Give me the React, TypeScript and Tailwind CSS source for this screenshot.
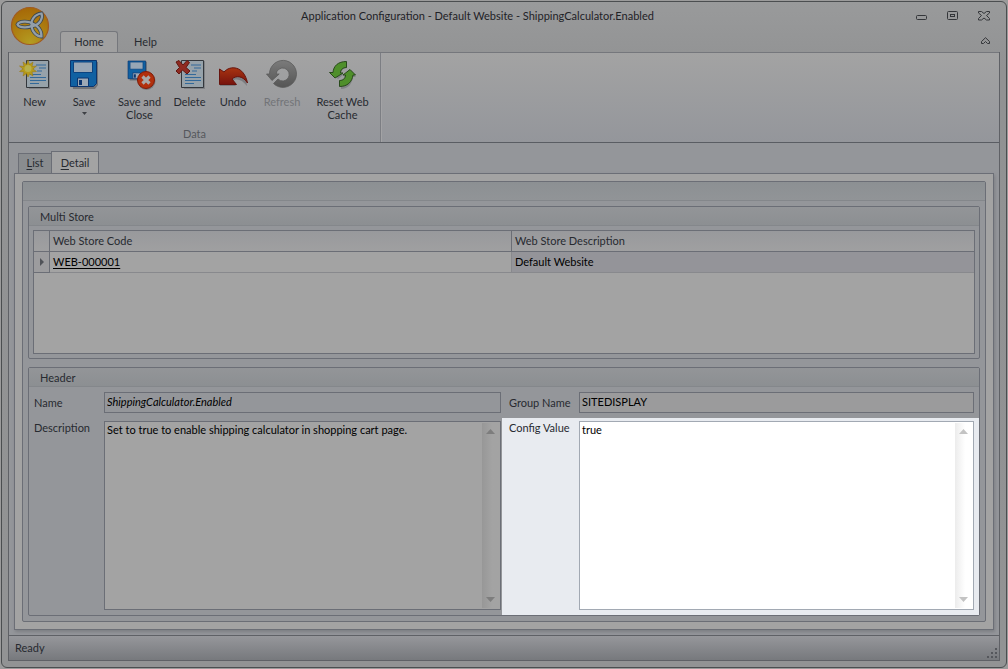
import type { ReactNode } from "react";

interface RibbonButtonProps {
  label: string;
  className: string;
  icon: ReactNode;
  disabled?: boolean;
  hasMenu?: boolean;
}

function RibbonButton({ label, className, icon, disabled, hasMenu }: RibbonButtonProps) {
  return (
    <button
      type="button"
      disabled={disabled}
      className={`flex shrink-0 flex-col items-center leading-[13px] text-[#272a30] disabled:text-[#727478] ${className}`}
    >
      <span className="mb-1 block h-8 w-8">{icon}</span>
      <span>{label}</span>
      {hasMenu && (
        <svg width="5" height="3" viewBox="0 0 5 3" className="mt-1" aria-hidden="true">
          <path d="M0 0h5L2.500 3z" fill="#3e4045" />
        </svg>
      )}
    </button>
  );
}

function Logo() {
  return (
    <svg width="40" height="40" viewBox="0 0 40 40" aria-hidden="true">
      <defs>
        <radialGradient id="orb" cx="0.5" cy="0.95" r="0.9">
          <stop offset="0" stopColor="#b39c22" />
          <stop offset="0.5" stopColor="#ae8112" />
          <stop offset="1" stopColor="#a66a08" />
        </radialGradient>
      </defs>
      <circle cx="20" cy="20" r="18.500" fill="url(#orb)" stroke="#a05a22" strokeWidth="1.200" />
      <g fill="none" stroke="#3b4650" strokeWidth="3.800">
        <path d="M23 19C19 22.500 9 22 7.500 18.500 9 15 19 14.500 23 18z" />
        <path d="M22 19.500c-2-5 3-11.500 9.500-12 2 5-2 11-8 12.500z" />
        <path d="M22 17.500c5 1 10 7 9.500 13-6 0-11-7-9.500-13z" />
      </g>
      <g fill="none" stroke="#939fa9" strokeWidth="2.200">
        <path d="M23 19C19 22.500 9 22 7.500 18.500 9 15 19 14.500 23 18z" />
        <path d="M22 19.500c-2-5 3-11.500 9.500-12 2 5-2 11-8 12.500z" />
        <path d="M22 17.500c5 1 10 7 9.500 13-6 0-11-7-9.500-13z" />
      </g>
    </svg>
  );
}

function PageShape() {
  return (
    <g>
      <path d="M10 2h21v28H10z" fill="#6d7074" opacity="0.6" />
      <path d="M7.500 1.500h22v27h-22z" fill="#96a2aa" stroke="#33373c" />
      <path d="M17 6h10M20 9h7M18 12h5M11 15.500h11M11 18.500h16M11 21.500h16M11 24.500h9" stroke="#32699a" />
    </g>
  );
}

function NewIcon() {
  return (
    <svg width="32" height="32" viewBox="0 0 32 32" aria-hidden="true">
      <PageShape />
      <path
        d="M9 1l1.500 4.500L14 3l-1 4.500 4.500-.5-3.500 3 3.500 2.500-4.500.5 1 4-3.500-2L9 18l-1.500-3.500L4 17l1-4-4.500-.5L4 10 .5 7 5 7.500 4 3l3.500 2.500z"
        fill="#b59a1b"
        stroke="#97750d"
        strokeWidth="0.500"
      />
      <circle cx="9" cy="9.500" r="3.500" fill="#b8b04c" />
    </svg>
  );
}

function DeleteIcon() {
  return (
    <svg width="32" height="32" viewBox="0 0 32 32" aria-hidden="true">
      <PageShape />
      <path
        d="M2 3l3-1.500 4 4.500 4-4.500 2.500 2-3.500 5L16 12l-3 3-4.500-4L5 15l-3-3 3.500-3.500z"
        fill="#8f2a21"
        stroke="#611710"
      />
    </svg>
  );
}

function FloppyShape() {
  return (
    <g>
      <path d="M3 3h26v23l-3 4H4z" fill="#55595e" opacity="0.6" />
      <path d="M1.500 1.500h26v23l-3 3h-23z" fill="#1061a2" stroke="#0b356f" />
      <path d="M4.500 3h19v10.500h-19z" fill="#98a6b5" stroke="#0b4380" />
      <path d="M8.500 19h11v8.500h-11z" fill="#9da9b6" stroke="#0b356f" />
      <path d="M10 21h3v5h-3z" fill="#0b356f" />
    </g>
  );
}

function SaveIcon() {
  return (
    <svg width="32" height="32" viewBox="-1 0 32 32" aria-hidden="true">
      <FloppyShape />
    </svg>
  );
}

function SaveCloseIcon() {
  return (
    <svg width="32" height="32" viewBox="-1 0 32 32" aria-hidden="true">
      <g transform="translate(2 1) scale(.68)">
        <FloppyShape />
      </g>
      <circle cx="21.500" cy="22" r="9" fill="#55595e" opacity="0.5" />
      <circle cx="21" cy="21" r="8.500" fill="#b2300d" stroke="#801b07" />
      <path d="M17.500 17.500l7 7m0-7l-7 7" stroke="#a9a9a9" strokeWidth="3.200" />
    </svg>
  );
}

function UndoIcon() {
  return (
    <svg width="32" height="32" viewBox="0 0 32 32" aria-hidden="true">
      <defs>
        <linearGradient id="undo" x1="0" y1="0" x2="0" y2="1">
          <stop offset="0" stopColor="#a83411" />
          <stop offset="1" stopColor="#77130d" />
        </linearGradient>
      </defs>
      <path d="M3 11l5 4c8-8 21-3 22 12-5-7-11-8-15-5l4 5H3z" fill="#66686c" opacity="0.600" />
      <path
        d="M2.500 10l4.500 3C13 6 27 6.500 30.500 24 26 17 19.500 16 15 20l4.500 5.500h-17z"
        fill="url(#undo)"
        stroke="#66140e"
      />
    </svg>
  );
}

function RefreshIcon() {
  return (
    <svg width="32" height="32" viewBox="0 0 32 32" aria-hidden="true">
      <defs>
        <linearGradient id="refresh" x1="0" y1="0" x2="0" y2="1">
          <stop offset="0" stopColor="#7b7b7b" />
          <stop offset="1" stopColor="#555" />
        </linearGradient>
      </defs>
      <path
        d="M3.500 15A13.500 13.500 0 1 1 7.500 24.500L12 20a6.500 6.500 0 1 0-1.800-5h3L6 21.500.5 15z"
        fill="url(#refresh)"
        stroke="#5a5a5a"
        strokeWidth="0.800"
      />
    </svg>
  );
}

function ResetIcon() {
  return (
    <svg width="32" height="32" viewBox="0 0 32 32" aria-hidden="true">
      <g fill="#64686a" opacity="0.500">
        <path d="M20 3v6c-5 0-6 3-6 6h3l-6 5-6-6h3C8 8 12 3 20 3z" />
        <path d="M14 30v-6c5 0 6-3 6-6h-3l5-7 7 7h-3c-1 7-5 12-12 12z" />
      </g>
      <g fill="#4f8f2b" stroke="#28491b">
        <path d="M19.500 2.500v6c-4 0-6 2.500-6 5.500h2.500L8 19 2.500 13.500H6C6.500 7 11 2.500 19.500 2.500z" />
        <path d="M12.500 27.500v-6c4 0 6-2.500 6-5.500H16l7-5.500 5.500 5.500H26c-1 7-5.500 11.500-13.500 11.500z" />
      </g>
    </svg>
  );
}

function GroupBox({ title, className, children }: { title: string; className: string; children: ReactNode }) {
  return (
    <section className={`flex flex-col rounded-xs border border-[#6b6e76] ${className}`}>
      <h2 className="flex h-[19px] shrink-0 items-center border-b border-[#84878b] bg-linear-to-b from-[#939598] to-[#8c8f92] pl-[11px] pt-[2px]">
        {title}
      </h2>
      {children}
    </section>
  );
}

interface MemoFieldProps {
  id: string;
  value: string;
  lit?: boolean;
}

// Multi-line editor with its own always visible scroll track.
function MemoField({ id, value, lit }: MemoFieldProps) {
  return (
    <div className={`flex min-w-0 flex-1 border ${lit ? "border-[#a2a9b3] bg-white" : "border-[#6b6e76] bg-[#a3a3a3]"}`}>
      <textarea
        id={id}
        defaultValue={value}
        className="min-w-0 flex-1 resize-none overflow-hidden px-[2px] leading-4 text-black outline-none"
      />
      <div
        className={`my-px mr-px flex w-[17px] flex-col items-center justify-between bg-linear-to-r py-[6px] ${
          lit ? "from-[#ececec] to-white to-60%" : "from-[#979797] to-[#a3a3a3] to-60%"
        }`}
      >
        <button type="button" aria-label="Scroll up">
          <svg width="9" height="5" viewBox="0 0 9 5" className="block">
            <path d="M0 5h9L4.500 0z" fill={lit ? "#c3c3c3" : "#7d7d7d"} />
          </svg>
        </button>
        <button type="button" aria-label="Scroll down">
          <svg width="9" height="5" viewBox="0 0 9 5" className="block">
            <path d="M0 0h9L4.500 5z" fill={lit ? "#c3c3c3" : "#7d7d7d"} />
          </svg>
        </button>
      </div>
    </div>
  );
}

function TitleBar() {
  return (
    <header className="flex h-[50px] shrink-0 items-start">
      <div className="flex w-[42px] justify-end pt-1">
        <Logo />
      </div>
      <div className="flex min-w-0 flex-1 flex-col">
        <h1 className="h-7 pt-[6px] text-center leading-4 text-[#1f2227]">
          Application Configuration - Default Website - ShippingCalculator.Enabled
        </h1>
        <nav className="flex pl-[10px] pt-px">
          <button
            type="button"
            className="-mb-px h-[22px] w-[58px] rounded-t-[3px] border border-b-0 border-[#75777c] bg-[#a0a0a0]"
          >
            Home
          </button>
          <button type="button" className="h-[22px] w-[55px] pt-px">
            Help
          </button>
        </nav>
      </div>
      <div className="flex w-[95px] flex-col pr-[10px] pt-[8px]">
        <div className="flex h-[11px] items-center justify-between pl-[11px]">
          <button type="button" aria-label="Minimize">
            <svg width="11" height="11" viewBox="0 0 11 11" fill="none" stroke="#34363a" className="block">
              <rect x="0.500" y="5.500" width="10" height="4" rx="1" />
            </svg>
          </button>
          <button type="button" aria-label="Maximize">
            <svg width="11" height="10" viewBox="0 0 11 10" fill="none" stroke="#34363a" className="block">
              <rect x="0.500" y="0.500" width="10" height="8" rx="1" />
              <rect x="3.500" y="3.500" width="4" height="2" />
            </svg>
          </button>
          <button type="button" aria-label="Close">
            <svg width="12" height="10" viewBox="0 0 12 10" fill="none" stroke="#34363a" className="block">
              <path d="M.5.500h3L6 2.500 8.500.500h3v1.500L8.500 4.500l3 3V9h-3L6 7 3.500 9h-3V7.500l3-3-3-2.500z" />
            </svg>
          </button>
        </div>
        <button type="button" aria-label="Collapse ribbon" className="mt-4 self-end">
          <svg width="9" height="8" viewBox="0 0 9 8" fill="none" stroke="#34363a" className="block">
            <path d="M4.500.700L8.500 4.500v2h-2l-2-2-2 2h-2v-2z" />
          </svg>
        </button>
      </div>
    </header>
  );
}

function Ribbon() {
  return (
    <div className="flex h-[91px] shrink-0 border-b border-t border-b-[#5a5d63] border-t-[#75777c] bg-linear-to-b from-[#a3a3a3] to-[#94969b]">
      <div className="flex w-[372px] flex-col border-r border-[#7c7e83]">
        <div className="flex flex-1 items-start pl-[3px] pt-[6px]">
          <RibbonButton label="New" className="w-[45px]" icon={<NewIcon />} />
          <RibbonButton label="Save" className="w-[54px]" icon={<SaveIcon />} hasMenu />
          <RibbonButton label="Save and Close" className="w-[57px]" icon={<SaveCloseIcon />} />
          <RibbonButton label="Delete" className="w-[43px]" icon={<DeleteIcon />} />
          <RibbonButton label="Undo" className="w-[44px]" icon={<UndoIcon />} />
          <RibbonButton label="Refresh" className="w-[54px]" icon={<RefreshIcon />} disabled />
          <RibbonButton label="Reset Web Cache" className="w-[67px]" icon={<ResetIcon />} />
        </div>
        <div className="h-4 text-center leading-4 text-[#55575c]">Data</div>
      </div>
      <div className="border-l border-[#a3a3a5]" />
    </div>
  );
}

function StoreTable() {
  return (
    <div className="m-1 h-[124px] border border-[#6b6e76] bg-[#a3a3a3]">
      <table className="w-full table-fixed border-separate border-spacing-0 text-left">
        <colgroup>
          <col className="w-4" />
          <col />
          <col />
        </colgroup>
        <thead>
          <tr className="h-[21px] bg-linear-to-b from-[#98999c] to-[#a0a0a1]">
            <th className="border-b border-r border-[#6b6e76] p-0" aria-label="Row" />
            <th className="border-b border-r border-[#6b6e76] px-[3px] py-0 font-normal">Web Store Code</th>
            <th className="border-b border-[#6b6e76] px-[3px] py-0 font-normal">Web Store Description</th>
          </tr>
        </thead>
        <tbody>
          <tr className="h-[21px]">
            <td className="border-b border-r border-[#6b6e76] bg-[#9c9c9e] p-0">
              <svg width="4" height="8" viewBox="0 0 4 8" className="mx-auto block" aria-label="Current row">
                <path d="M0 0l4 4-4 4z" fill="#505358" />
              </svg>
            </td>
            <td className="border-b border-r border-[#88898d] px-[3px] py-0">
              <a href="#web-000001" className="text-black underline underline-offset-2">
                WEB-000001
              </a>
            </td>
            <td className="border-b border-[#88898d] bg-[#949499] px-[3px] py-0 text-black">Default Website</td>
          </tr>
        </tbody>
      </table>
    </div>
  );
}

function HeaderForm() {
  return (
    <div className="grid flex-1 grid-cols-[473fr_477fr] grid-rows-[31px_1fr]">
      <div className="flex py-[5px] pl-[5px] pr-px">
        <label htmlFor="name" className="w-[70px] shrink-0 pt-[3px] leading-4">
          Name
        </label>
        <input
          id="name"
          readOnly
          defaultValue="ShippingCalculator.Enabled"
          className="min-w-0 flex-1 border border-[#6b6e76] px-[2px] pb-px italic text-black outline-none"
        />
      </div>
      <div className="flex py-[5px] pl-[7px] pr-[5px]">
        <label htmlFor="group-name" className="w-[70px] shrink-0 pt-[3px] leading-4">
          Group Name
        </label>
        <input
          id="group-name"
          defaultValue="SITEDISPLAY"
          className="min-w-0 flex-1 border border-[#6b6e76] bg-[#9b9b9c] px-[2px] pb-px text-black outline-none"
        />
      </div>
      <div className="flex pb-[5px] pl-[5px] pr-px pt-[3px]">
        <label htmlFor="description" className="w-[70px] shrink-0 leading-[14px]">
          Description
        </label>
        <MemoField id="description" value="Set to true to enable shipping calculator in shopping cart page." />
      </div>
      <div className="flex bg-[#e8ebf0] pb-[5px] pl-[7px] pr-[5px] pt-[3px]">
        <label htmlFor="config-value" className="w-[70px] shrink-0 leading-[14px]">
          Config Value
        </label>
        <MemoField id="config-value" value="true" lit />
      </div>
    </div>
  );
}

export default function App() {
  return (
    <div className="flex min-h-screen flex-col bg-[#9b9b9b] p-px font-['Lato',sans-serif] text-[11px] text-[#272a30]">
      <div className="flex flex-1 flex-col rounded-md border border-[#4b4e50] bg-[#929394] bg-linear-to-b from-[#999a9b] via-[#919293] via-10% to-[#929394] px-[6px] pb-[6px]">
        <TitleBar />
        <div className="flex flex-1 flex-col border border-t-0 border-[#5f6166] bg-[#94969a]">
          <Ribbon />
          <main className="flex flex-1 flex-col px-[5px] pb-[5px] pt-2">
            <div role="tablist" className="flex items-end pl-1">
              <button
                type="button"
                role="tab"
                aria-selected="false"
                className="h-5 w-[33px] border border-b-0 border-r-0 border-[#6b6e76] bg-[#898c8f]"
              >
                <span className="underline underline-offset-2">L</span>ist
              </button>
              <button
                type="button"
                role="tab"
                aria-selected="true"
                className="-mb-px h-[23px] w-12 border border-b-0 border-[#6b6e76] bg-[#a3a3a3]"
              >
                <span className="underline underline-offset-2">D</span>etail
              </button>
            </div>
            <div className="flex flex-1 flex-col border border-[#6b6e76] bg-[#a3a3a3] p-[7px] shadow-[1px_2px_3px_#7d7f84]">
              <div className="flex flex-1 flex-col rounded-xs border border-[#6b6e76] bg-[#94969a]">
                <div className="h-[19px] shrink-0 border-b border-[#84878b] bg-linear-to-b from-[#8c9093] to-[#919497]" />
                <div className="flex flex-1 flex-col gap-2 p-[5px]">
                  <GroupBox title="Multi Store" className="shrink-0">
                    <StoreTable />
                  </GroupBox>
                  <GroupBox title="Header" className="flex-1">
                    <HeaderForm />
                  </GroupBox>
                </div>
              </div>
            </div>
          </main>
          <footer className="flex h-[25px] shrink-0 items-center justify-between border-t border-[#5f6166] bg-linear-to-b from-[#96979b] to-[#77797d] pl-[6px] pr-[2px]">
            <span>Ready</span>
            <svg width="10" height="10" viewBox="0 0 10 10" className="mb-[2px] self-end" fill="#55575c" aria-hidden="true">
              <path d="M8 0h2v2H8zM4 4h2v2H4zM8 4h2v2H8zM0 8h2v2H0zM4 8h2v2H4zM8 8h2v2H8z" />
            </svg>
          </footer>
        </div>
      </div>
    </div>
  );
}
